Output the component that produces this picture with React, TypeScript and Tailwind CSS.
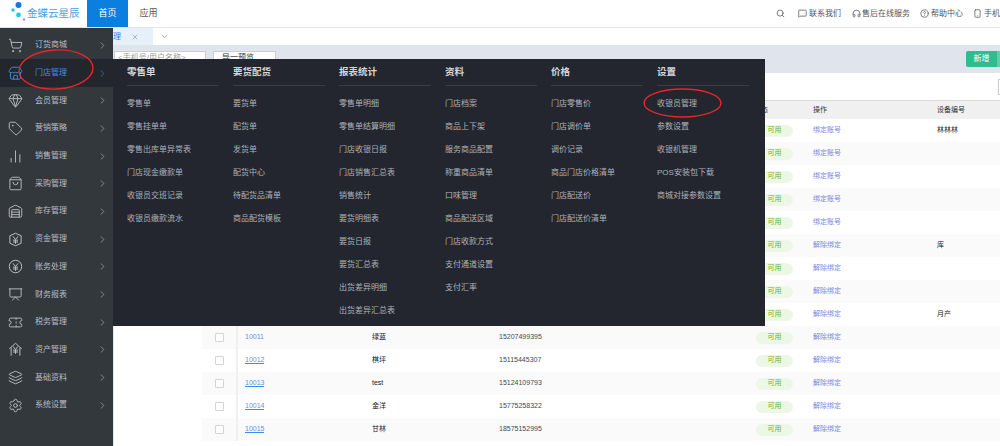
import {
  ChartNoAxesColumn,
  ChevronDown,
  ChevronRight,
  CircleHelp,
  Gem,
  Headphones,
  Layers,
  MessageSquare,
  Presentation,
  Search,
  Settings,
  ShoppingBag,
  ShoppingCart,
  Smartphone,
  Store,
  Tag,
  Ticket,
  Warehouse,
  X,
} from 'lucide-react'

function YenIcon({ shape }: { shape: 'circle' | 'hex' | 'house' }) {
  return (
    <svg width="15" height="15" viewBox="0 0 24 24" fill="none" stroke="currentColor" strokeWidth="1.6">
      {shape === 'circle' && <circle cx="12" cy="12" r="10" />}
      {shape === 'hex' && <path d="M12 2l9 4v12l-9 4-9-4V6z" />}
      {shape === 'house' && <path d="M2 11l10-9 10 9M5 9v13M19 9v13" />}
      <path d="M8 7l4 5 4-5M12 12v7M8 13h8M8 16h8" />
    </svg>
  )
}

const menu = [
  { label: '订货商城', icon: <ShoppingCart size={15} strokeWidth={1.5} /> },
  { label: '门店管理', icon: <Store size={15} strokeWidth={1.5} />, active: true },
  { label: '会员管理', icon: <Gem size={15} strokeWidth={1.5} /> },
  { label: '营销策略', icon: <Tag size={15} strokeWidth={1.5} /> },
  { label: '销售管理', icon: <ChartNoAxesColumn size={15} strokeWidth={1.5} /> },
  { label: '采购管理', icon: <ShoppingBag size={15} strokeWidth={1.5} /> },
  { label: '库存管理', icon: <Warehouse size={15} strokeWidth={1.5} /> },
  { label: '资金管理', icon: <YenIcon shape="hex" /> },
  { label: '账务处理', icon: <YenIcon shape="circle" /> },
  { label: '财务报表', icon: <Presentation size={15} strokeWidth={1.5} /> },
  { label: '税务管理', icon: <Ticket size={15} strokeWidth={1.5} /> },
  { label: '资产管理', icon: <YenIcon shape="house" /> },
  { label: '基础资料', icon: <Layers size={15} strokeWidth={1.5} /> },
  { label: '系统设置', icon: <Settings size={15} strokeWidth={1.5} /> },
]

const columns = [
  { title: '零售单', items: ['零售单', '零售挂单单', '零售出库单异常表', '门店现金缴款单', '收银员交班记录', '收银员缴款流水'] },
  { title: '要货配货', items: ['要货单', '配货单', '发货单', '配货中心', '待配货品清单', '商品配货模板'] },
  {
    title: '报表统计',
    items: ['零售单明细', '零售单结算明细', '门店收银日报', '门店销售汇总表', '销售统计', '要货明细表', '要货日报', '要货汇总表', '出货差异明细', '出货差异汇总表'],
  },
  {
    title: '资料',
    items: ['门店档案', '商品上下架', '服务商品配置', '称重商品清单', '口味管理', '商品配送区域', '门店收款方式', '支付通道设置', '支付汇率'],
  },
  { title: '价格', items: ['门店零售价', '门店调价单', '调价记录', '商品门店价格清单', '门店配送价', '门店配送价清单'] },
  { title: '设置', items: ['收银员管理', '参数设置', '收银机管理', 'POS安装包下载', '商城对接参数设置'] },
]

// rows above 10011 sit behind the open menu, only their right-hand cells show
const rows = [
  { id: '', name: '', phone: '', note: '林林林' },
  { id: '', name: '', phone: '' },
  { id: '', name: '', phone: '' },
  { id: '', name: '', phone: '' },
  { id: '', name: '', phone: '' },
  { id: '', name: '', phone: '', note: '库' },
  { id: '', name: '', phone: '' },
  { id: '', name: '', phone: '' },
  { id: '', name: '', phone: '', note: '月产' },
  { id: '10011', name: '绿蓝', phone: '15207499395' },
  { id: '10012', name: '棋坪', phone: '15115445307' },
  { id: '10013', name: 'test', phone: '15124109793' },
  { id: '10014', name: '金洋', phone: '15775258322' },
  { id: '10015', name: '甘林', phone: '18575152995' },
]

function App() {
  return (
    <div className="relative flex h-[446px] w-[1000px] flex-col overflow-hidden bg-white font-['Liberation_Sans','Noto_Sans_CJK_SC',sans-serif] text-[8px] text-[#333]">
      <header className="flex h-[28px] shrink-0 border-b border-[#e3e3e3]">
        <div className="flex w-[87px] shrink-0 items-center">
          <svg width="27" height="27" viewBox="0 0 27 27" className="shrink-0">
            <circle cx="18.5" cy="5" r="3" fill="#1677e0" />
            <circle cx="13" cy="10" r="1.8" fill="#22c8e6" />
            <circle cx="18.5" cy="15" r="2.4" fill="#22c8e6" />
            <circle cx="24" cy="19.5" r="1.2" fill="#a58be8" />
          </svg>
          <span className="whitespace-nowrap text-[10.5px] text-[#4a9fe0]">金蝶云星辰</span>
        </div>
        <div className="flex h-[27px] w-[41px] shrink-0 items-center justify-center bg-[#0a7fe0] text-[9px] text-white">首页</div>
        <div className="flex h-[27px] w-[41px] shrink-0 items-center justify-center text-[9px] text-[#555]">应用</div>
        <div className="ml-[607px] flex h-[27px] shrink-0 items-center text-[#555]">
          <Search size={9} className="mr-[13px]" />
          <MessageSquare size={9} />
          <span className="ml-[2px] mr-[10px] w-[33px]">联系我们</span>
          <Headphones size={9} />
          <span className="ml-[1px] mr-[9px] w-[49px]">售后在线服务</span>
          <CircleHelp size={9} />
          <span className="ml-[2px] mr-[9px] w-[33px]">帮助中心</span>
          <Smartphone size={9} />
          <span className="ml-[2px] whitespace-nowrap">手机版</span>
        </div>
      </header>

      <div className="flex min-h-0 flex-1">
        <aside className="w-[113px] shrink-0 bg-[#33383d] pt-[3.5px] text-[#b9bdc2]">
          {menu.map((m) => (
            <div
              key={m.label}
              className={`flex h-[27.7px] items-center pl-[8px] ${m.active ? 'bg-[#23262c] text-[#3f8fe8]' : ''}`}
            >
              <span className="flex w-[27px] shrink-0">{m.icon}</span>
              <span className="w-[62px] shrink-0">{m.label}</span>
              <ChevronRight size={11} strokeWidth={1.3} />
            </div>
          ))}
        </aside>

        <main className="flex min-w-0 flex-1 flex-col">
          <div className="flex h-[17px] shrink-0 items-center bg-white">
            <div className="flex h-full w-[40px] items-center justify-between bg-[#e6f0fb] pr-[6px] text-[#2c86e8]">
              <span>理</span>
              <X size={8} className="mr-[8px] text-[#999]" />
            </div>
            <ChevronDown size={9} className="ml-[7px] text-[#888]" />
          </div>

          <div className="flex h-[28px] shrink-0 items-start gap-[7px] overflow-hidden bg-[#e0e4ec] pt-[6px]">
            <div className="ml-[1px] h-[16px] w-[92px] border border-[#ccc] bg-white pl-[3px] text-[#999]">&lt;手机号/用户名称&gt;</div>
            <div className="h-[16px] w-[63px] border border-[#ccc] bg-white pl-[8px]">导一预览</div>
            <div className="ml-auto flex h-[16px] shrink-0">
              <div className="flex w-[31px] items-center justify-center rounded-l-[2px] bg-[#2dbd8e] text-white">新增</div>
              <div className="w-[3px] bg-[#5fd0ab]" />
            </div>
          </div>

          <div className="flex h-[27px] shrink-0 items-center justify-end bg-white">
            <div className="h-[16px] w-[2px] border-y border-l border-[#ccc]" />
          </div>

          <div className="flex min-h-0 flex-1">
            <div className="w-[89px] shrink-0 border-l border-[#e0e4ec] bg-white" />
            <div className="w-[798px] shrink-0 border-t border-[#d9d9d9]">
              <div className="flex h-[18px] items-center bg-[#f0f0f0] text-[7px]">
                <span className="w-[552px] shrink-0" />
                <span className="w-[59px] shrink-0">状态</span>
                <span className="w-[124px] shrink-0">操作</span>
                <span>设备编号</span>
              </div>
              {rows.map((r, i) => (
                <div key={i} className={`flex h-[23px] items-center text-[7px] ${i % 2 === 1 ? 'bg-[#fafafa]' : 'bg-white'}`}>
                  <div className="flex h-full w-[36px] shrink-0 items-center justify-center border-r-2 border-[#f0f0f0]">
                    <span className="h-[9px] w-[9px] rounded-[1px] border border-[#d4d4d4] bg-white" />
                  </div>
                  <div className="w-[134px] shrink-0 pl-[7px]">
                    <span className={`text-[#6a8fd8] ${r.id && r.id !== '10011' ? 'border-b border-[#3c8cf0]' : ''}`}>{r.id}</span>
                  </div>
                  <div className="w-[127px] shrink-0 text-[#222]">{r.name}</div>
                  <div className="w-[257px] shrink-0 text-[#3a4a5c]">{r.phone}</div>
                  <div className="w-[57px] shrink-0">
                    <span className="flex h-[12px] w-[37px] items-center justify-center rounded-full bg-[#edf7e6] text-[#6bb52a]">可用</span>
                  </div>
                  <div className="w-[124px] shrink-0 text-[#7b86e0]">{i < 5 ? '绑定账号' : '解除绑定'}</div>
                  <div className="text-[#222]">{r.note}</div>
                </div>
              ))}
            </div>
          </div>
        </main>
      </div>

      <div className="absolute left-[113px] top-[59px] flex h-[267px] w-[652px] bg-[#23262e]">
        {columns.map((c) => (
          <div key={c.title} className="w-[106px] pl-[14px]">
            <div className="flex h-[27px] w-[92px] items-center border-b border-[#3a3d42] text-[9.5px] font-bold text-[#d4d6da]">
              {c.title}
            </div>
            <ul className="mt-[6px] text-[#aeb2b8]">
              {c.items.map((item) => (
                <li key={item} className="flex h-[23px] items-center whitespace-nowrap">
                  {item}
                </li>
              ))}
            </ul>
          </div>
        ))}
      </div>

      <svg className="pointer-events-none absolute inset-0" width="1000" height="446" fill="none" stroke="#e8252a" strokeWidth="1.4">
        <ellipse cx="56" cy="69.5" rx="37" ry="19.5" transform="rotate(-3 56 69.5)" />
        <ellipse cx="682.5" cy="103" rx="38.5" ry="14" />
      </svg>
    </div>
  )
}

export default App
